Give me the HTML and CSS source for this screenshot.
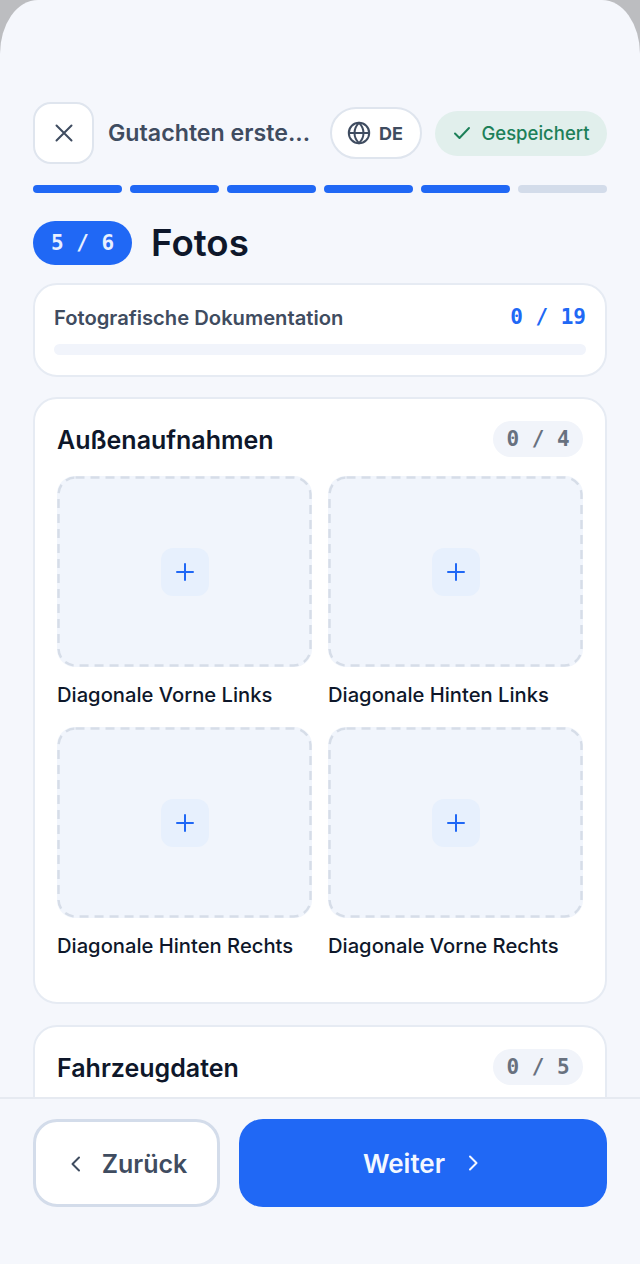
FILE: index.html
```html
<!DOCTYPE html>
<html lang="de">
<head>
    <meta charset="UTF-8">
    <meta name="viewport" content="width=device-width, initial-scale=1.0">
    <title>Gutachten erstellen - Fotos</title>
    <link rel="stylesheet" href="styles.css">
</head>
<body>
    <div class="screen">
        <div class="content">
            <header class="topbar">
                <button class="close-btn" type="button" aria-label="Schließen">
                    <svg width="24" height="24" viewBox="0 0 24 24"><path d="M4.5 4.5l15 15M19.5 4.5l-15 15"/></svg>
                </button>
                <span class="topbar-title">Gutachten erste...</span>
                <button class="lang-btn" type="button">
                    <svg width="24" height="24" viewBox="0 0 24 24"><circle cx="12" cy="12" r="10.2"/><path d="M2 12h20M12 1.8c-6 6-6 14.4 0 20.4M12 1.8c6 6 6 14.4 0 20.4"/></svg>
                    DE
                </button>
                <span class="saved-pill">
                    <svg width="20" height="20" viewBox="0 0 20 20"><path d="M3 10.5l4.5 4.5 9.5-10"/></svg>
                    Gespeichert
                </span>
            </header>

            <div class="progress">
                <span class="done"></span>
                <span class="done"></span>
                <span class="done"></span>
                <span class="done"></span>
                <span class="done"></span>
                <span></span>
            </div>

            <div class="step-head">
                <span class="step-badge">5 / 6</span>
                <h1>Fotos</h1>
            </div>

            <section class="card summary">
                <div class="summary-row">
                    <span class="summary-label">Fotografische Dokumentation</span>
                    <span class="summary-count">0 / 19</span>
                </div>
                <div class="summary-bar"></div>
            </section>

            <section class="card group">
                <div class="group-head">
                    <h2>Außenaufnahmen</h2>
                    <span class="count-chip">0 / 4</span>
                </div>
                <div class="photo-grid">
                    <div class="photo-item">
                        <div class="photo-slot"><span class="add-box"><svg width="20" height="20" viewBox="0 0 20 20"><path d="M10 2v16M2 10h16"/></svg></span></div>
                        <p>Diagonale Vorne Links</p>
                    </div>
                    <div class="photo-item">
                        <div class="photo-slot"><span class="add-box"><svg width="20" height="20" viewBox="0 0 20 20"><path d="M10 2v16M2 10h16"/></svg></span></div>
                        <p>Diagonale Hinten Links</p>
                    </div>
                    <div class="photo-item">
                        <div class="photo-slot"><span class="add-box"><svg width="20" height="20" viewBox="0 0 20 20"><path d="M10 2v16M2 10h16"/></svg></span></div>
                        <p>Diagonale Hinten Rechts</p>
                    </div>
                    <div class="photo-item">
                        <div class="photo-slot"><span class="add-box"><svg width="20" height="20" viewBox="0 0 20 20"><path d="M10 2v16M2 10h16"/></svg></span></div>
                        <p>Diagonale Vorne Rechts</p>
                    </div>
                </div>
            </section>

            <section class="card group">
                <div class="group-head">
                    <h2>Fahrzeugdaten</h2>
                    <span class="count-chip">0 / 5</span>
                </div>
                <div class="photo-grid">
                    <div class="photo-item">
                        <div class="photo-slot"></div>
                    </div>
                    <div class="photo-item">
                        <div class="photo-slot"></div>
                    </div>
                </div>
            </section>
        </div>

        <footer class="footer">
            <button class="back-btn" type="button">
                <svg width="20" height="20" viewBox="0 0 20 20"><path d="M13 3.5L6.5 10l6.5 6.5"/></svg>
                Zurück
            </button>
            <button class="next-btn" type="button">
                Weiter
                <svg width="20" height="20" viewBox="0 0 20 20"><path d="M7 3.5l6.5 6.5L7 16.5"/></svg>
            </button>
        </footer>
    </div>
</body>
</html>
```

FILE: styles.css
```css
:root {
    --primary-color: #2068f5;
    --text-dark: #0e172a;
    --text-muted: #3f4c60;
    --line-color: #e6ebf3;
    --tile-color: #f1f5fc;
    --page-color: #f5f7fc;
}

* {
    margin: 0;
    padding: 0;
    box-sizing: border-box;
}

html, body {
    height: 100%;
}

body {
    font-family: 'Inter', 'Noto Sans', sans-serif;
    background-color: #bcbdc0;
    overflow: hidden;
}

button {
    font-family: inherit;
    cursor: pointer;
}

svg {
    display: block;
    flex-shrink: 0;
    fill: none;
    stroke: currentColor;
    stroke-width: 2;
    stroke-linecap: round;
    stroke-linejoin: round;
}

.screen {
    height: 1264px;
    display: flex;
    flex-direction: column;
    background-color: var(--page-color);
    border-radius: 38px 38px 0 0 / 54px 54px 0 0;
    overflow: hidden;
}

.content {
    flex: 1;
    min-height: 0;
    overflow: hidden;
    padding: 102px 33px 0;
}

/* Top bar */
.topbar {
    display: flex;
    align-items: center;
    height: 62px;
}

.close-btn {
    width: 61px;
    height: 62px;
    display: flex;
    align-items: center;
    justify-content: center;
    background: white;
    border: 2px solid #dfe5ee;
    border-radius: 18px;
    color: var(--text-muted);
    flex-shrink: 0;
}

.topbar-title {
    width: 222px;
    margin-left: 14px;
    font-size: 23.2px;
    font-weight: 600;
    color: var(--text-muted);
    white-space: nowrap;
}

.lang-btn {
    width: 92px;
    height: 52px;
    display: flex;
    align-items: center;
    justify-content: center;
    gap: 8px;
    padding-right: 2px;
    background: white;
    border: 2px solid #dfe5ee;
    border-radius: 26px;
    color: var(--text-muted);
    font-size: 18px;
    font-weight: 700;
    flex-shrink: 0;
}

.saved-pill {
    width: 172px;
    height: 45px;
    margin-left: 13px;
    display: flex;
    align-items: center;
    justify-content: center;
    gap: 9px;
    background-color: #e1efec;
    border-radius: 23px;
    color: #1d8059;
    font-size: 18.5px;
    font-weight: 500;
    flex-shrink: 0;
}

/* Step progress */
.progress {
    display: flex;
    gap: 8px;
    margin-top: 21px;
}

.progress span {
    flex: 1;
    height: 8px;
    border-radius: 4px;
    background-color: #d3dcea;
}

.progress .done {
    background-color: var(--primary-color);
}

.step-head {
    display: flex;
    align-items: center;
    gap: 19px;
    margin-top: 28px;
}

.step-badge {
    width: 99px;
    height: 44px;
    display: flex;
    align-items: center;
    justify-content: center;
    border-radius: 22px;
    background-color: var(--primary-color);
    color: #e9f0ff;
    font-family: 'DejaVu Sans Mono', monospace;
    font-size: 21px;
    font-weight: 700;
}

h1 {
    font-size: 36.7px;
    line-height: 44px;
    font-weight: 600;
    color: var(--text-dark);
}

/* Cards */
.card {
    background: white;
    border: 2px solid var(--line-color);
    border-radius: 24px;
}

.summary {
    height: 94px;
    margin-top: 18px;
    padding: 17px 19px 0;
}

.summary-row {
    display: flex;
    align-items: center;
    justify-content: space-between;
    height: 30px;
}

.summary-label {
    font-size: 20.2px;
    font-weight: 600;
    color: var(--text-muted);
}

.summary-count {
    font-family: 'DejaVu Sans Mono', monospace;
    font-size: 21px;
    font-weight: 700;
    color: var(--primary-color);
}

.summary-bar {
    height: 11px;
    margin-top: 12px;
    border-radius: 6px;
    background-color: #f1f4fb;
}

.group {
    margin-top: 20px;
    padding: 22px 22px 42px;
}

.group + .group {
    margin-top: 21px;
}

.group-head {
    display: flex;
    align-items: center;
    justify-content: space-between;
    height: 36px;
}

h2 {
    padding-top: 2px;
    font-size: 25px;
    font-weight: 600;
    color: var(--text-dark);
}

.count-chip {
    width: 90px;
    height: 36px;
    display: flex;
    align-items: center;
    justify-content: center;
    border-radius: 18px;
    background-color: #f1f4fa;
    color: #68717f;
    font-family: 'DejaVu Sans Mono', monospace;
    font-size: 21px;
    font-weight: 700;
}

.photo-grid {
    display: grid;
    grid-template-columns: 1fr 1fr;
    column-gap: 16px;
    row-gap: 18px;
    margin-top: 19px;
}

.photo-slot {
    height: 191px;
    display: flex;
    align-items: center;
    justify-content: center;
    background-color: var(--tile-color);
    background-image: url("data:image/svg+xml,%3Csvg xmlns='http://www.w3.org/2000/svg' width='100%25' height='100%25'%3E%3Crect x='1.5' y='1.5' width='252' height='188' rx='17' fill='none' stroke='%23d6dde8' stroke-width='2.5' stroke-dasharray='9 6'/%3E%3C/svg%3E");
    border-radius: 18px;
}

.add-box {
    width: 48px;
    height: 48px;
    display: flex;
    align-items: center;
    justify-content: center;
    border-radius: 12px;
    background-color: #e7f0fd;
    color: var(--primary-color);
}

.photo-item p {
    margin-top: 14px;
    font-size: 20.2px;
    line-height: 28px;
    font-weight: 500;
    color: var(--text-dark);
    white-space: nowrap;
}

/* Footer */
.footer {
    height: 167px;
    flex-shrink: 0;
    display: flex;
    gap: 19px;
    padding: 20px 33px 0;
    background-color: var(--page-color);
    border-top: 2px solid #e6eaf1;
}

.back-btn,
.next-btn {
    height: 88px;
    display: flex;
    align-items: center;
    justify-content: center;
    border-radius: 24px;
    font-size: 26px;
    font-weight: 600;
}

.back-btn {
    width: 187px;
    gap: 16px;
    padding-top: 1px;
    font-size: 25px;
    background: white;
    border: 3px solid #d3dcea;
    color: var(--text-muted);
}

.next-btn {
    flex: 1;
    gap: 18px;
    background-color: var(--primary-color);
    border: none;
    color: #f3f7ff;
}
```
